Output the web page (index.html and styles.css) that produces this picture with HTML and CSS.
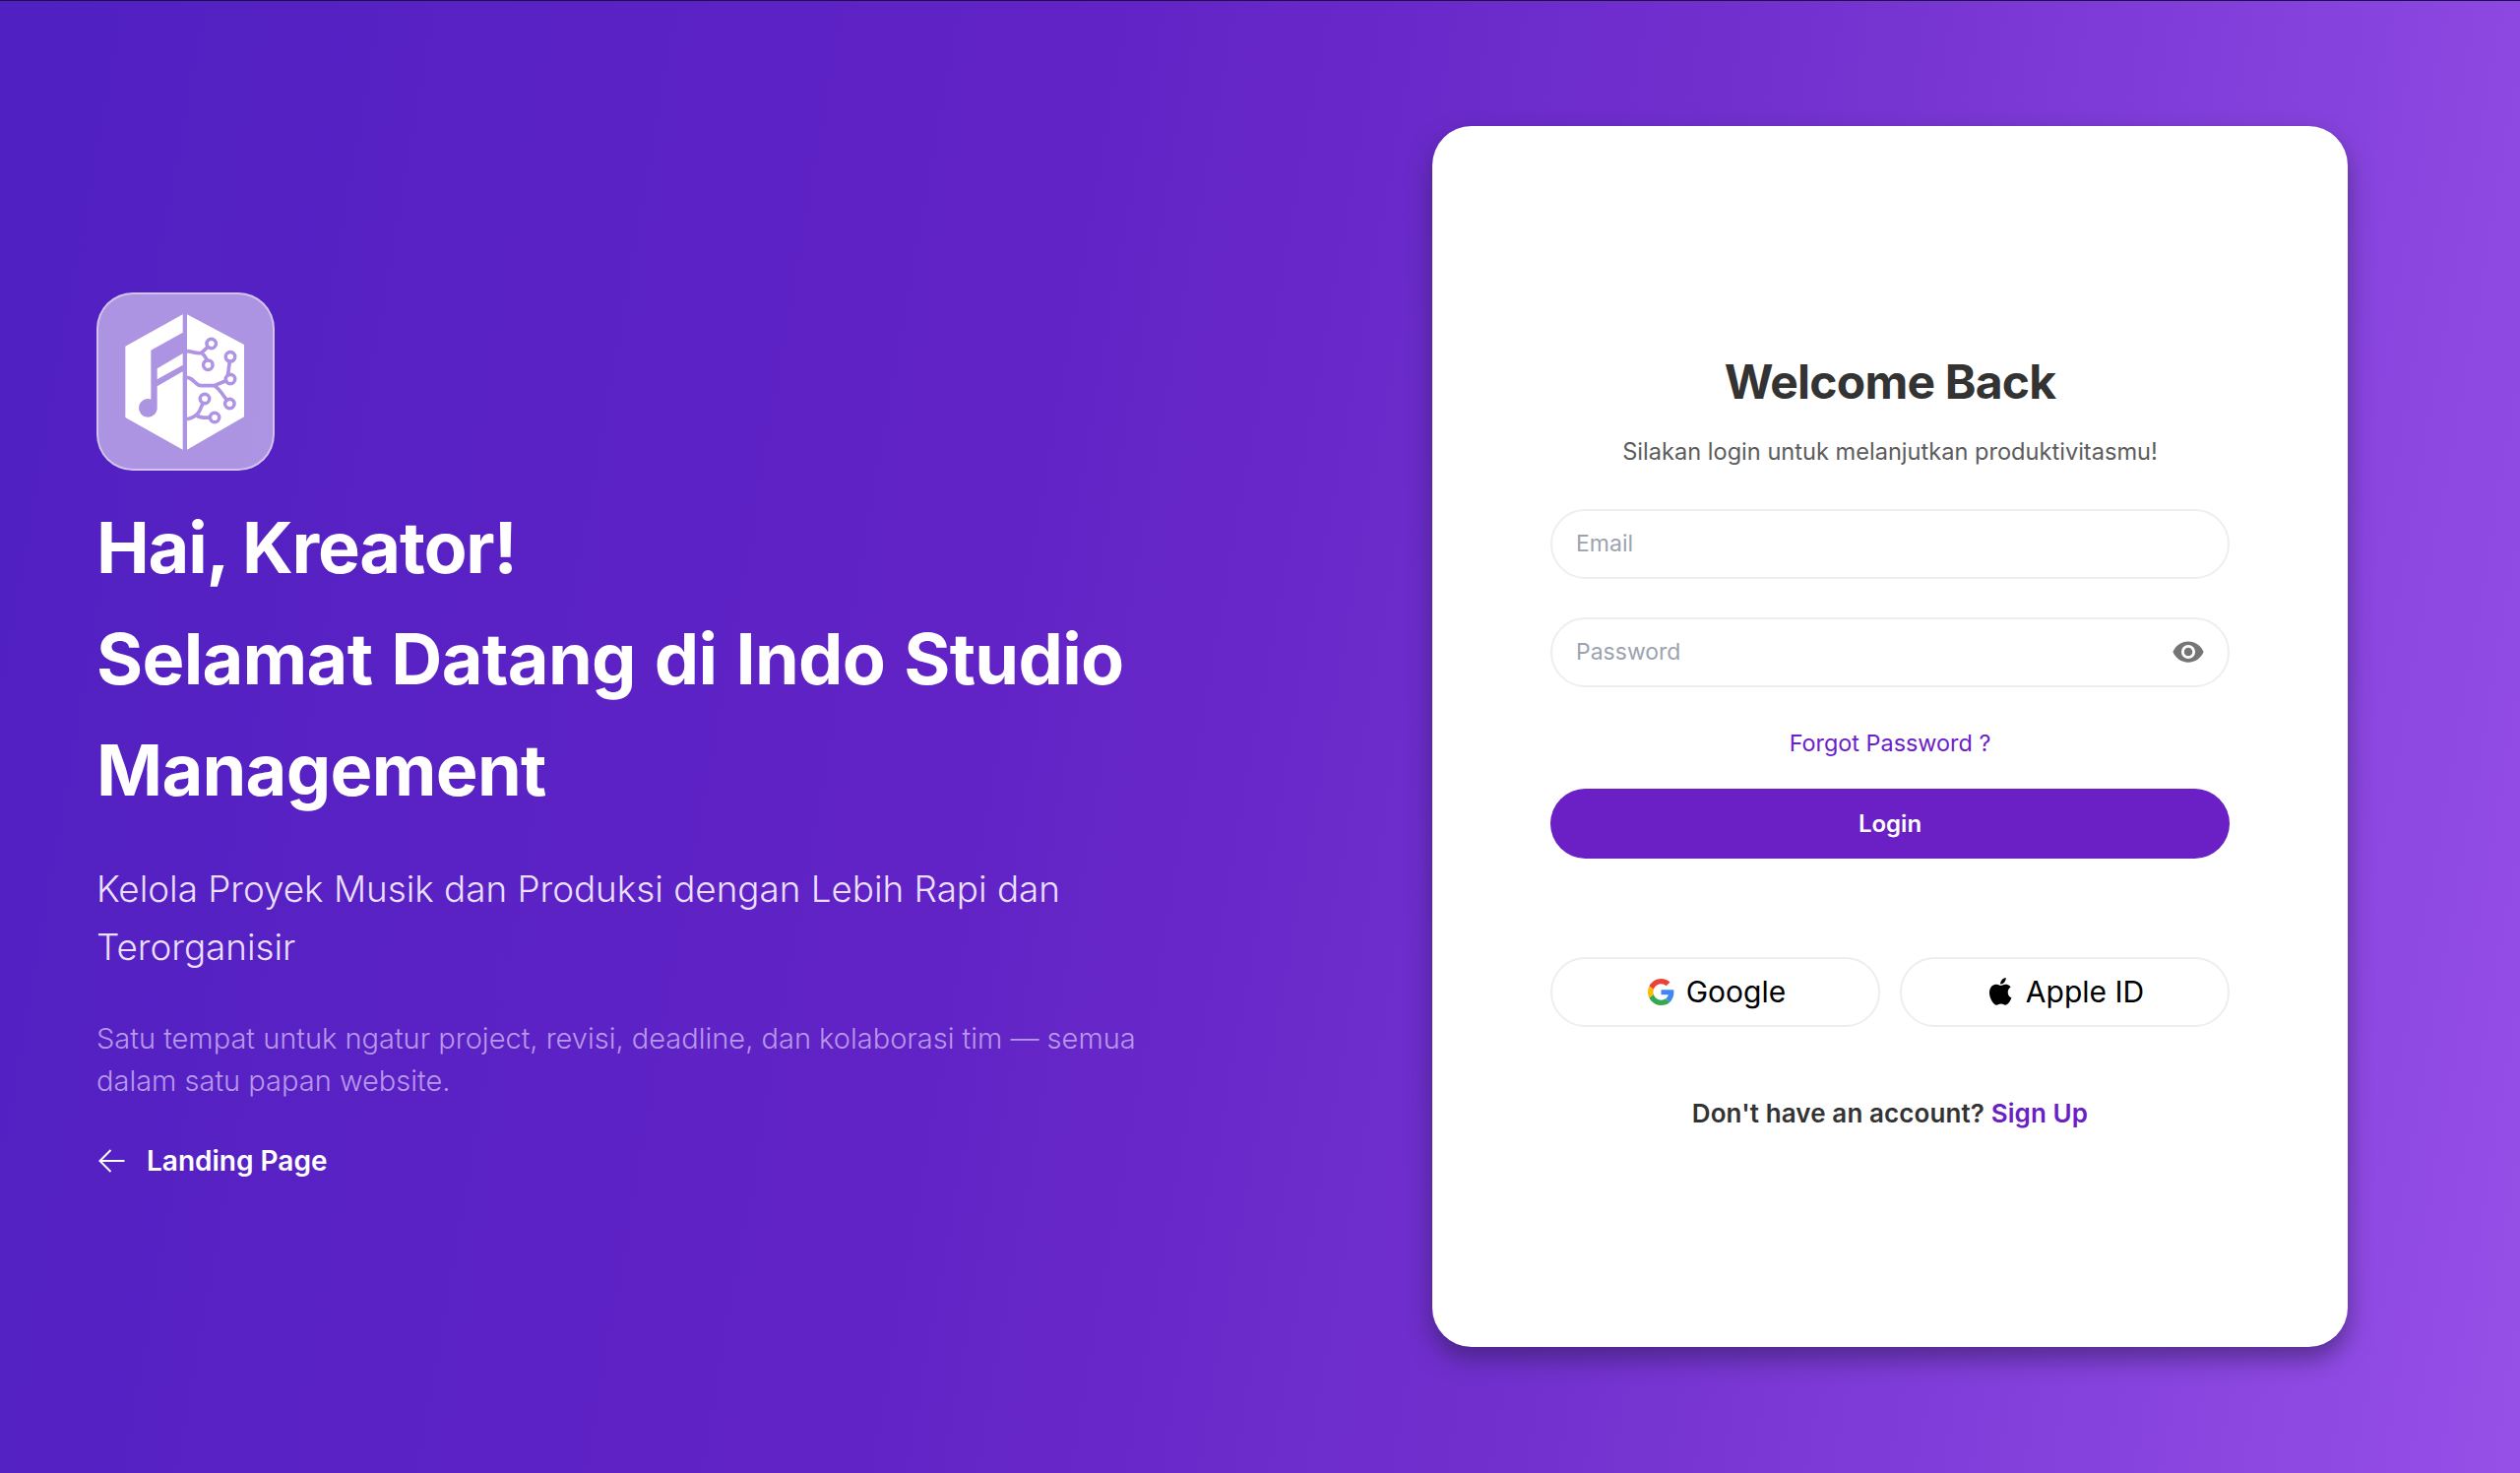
FILE: index.html
```html
<!DOCTYPE html>
<html lang="id">
<head>
<meta charset="utf-8">
<title>Indo Studio Management</title>
<link rel="stylesheet" href="styles.css">
</head>
<body>
<main class="page">
  <section class="hero">
    <div class="logo">
      <svg class="logo-mark" viewBox="0 0 660 660" aria-hidden="true">
        <path fill="#fff" fill-rule="evenodd" d="M320 118 145 215V432L320 530ZM320 173 223 227V376.500A28 28 0 1 0 242 403V337L320 292V272L242 316V283L320 237Z"/>
        <path fill="#fff" d="M333 118 507 210V430L333 530Z"/>
        <g fill="none" stroke="#af94e4" stroke-width="11">
          <path d="M333 230C350 232 365 238 377 235L407 207M377 235C390 245 395 255 397 272"/>
          <path d="M333 310C355 312 358 335 375 335H415L465 315M415 335C435 345 445 370 463 390M465 247 458 300 465 315"/>
          <path d="M333 437C355 432 365 425 372 410L387 375M362 425C370 435 390 432 417 432"/>
          <circle cx="407" cy="207" r="14"/><circle cx="397" cy="272" r="14"/><circle cx="465" cy="247" r="14"/><circle cx="465" cy="315" r="14"/><circle cx="463" cy="390" r="14"/><circle cx="387" cy="375" r="14"/><circle cx="417" cy="432" r="14"/>
        </g>
        <g fill="#fff">
          <circle cx="407" cy="207" r="8.500"/><circle cx="397" cy="272" r="8.500"/><circle cx="465" cy="247" r="8.500"/><circle cx="465" cy="315" r="8.500"/><circle cx="463" cy="390" r="8.500"/><circle cx="387" cy="375" r="8.500"/><circle cx="417" cy="432" r="8.500"/>
        </g>
      </svg>
    </div>
    <h1 class="headline"><span class="greet">Hai, Kreator!</span><br>Selamat Datang di Indo Studio Management</h1>
    <p class="subhead">Kelola Proyek Musik dan Produksi dengan Lebih Rapi dan Terorganisir</p>
    <p class="note">Satu tempat untuk ngatur project, revisi, deadline, dan kolaborasi tim — semua dalam satu papan website.</p>
    <a class="back" href="#">
      <svg class="back-icon" viewBox="0 0 29 24" aria-hidden="true"><path d="M28.500 12H3.500M14.500 1 3.500 12l11 11"/></svg>
      Landing Page
    </a>
  </section>
  <section class="card">
    <h2 class="title">Welcome Back</h2>
    <p class="lead">Silakan login untuk melanjutkan produktivitasmu!</p>
    <div class="field field-email"><span class="placeholder">Email</span></div>
    <div class="field field-pass">
      <span class="placeholder">Password</span>
      <svg class="eye" viewBox="0 0 24 24" aria-hidden="true"><path fill="#757575" d="M12 4.500C7 4.500 2.700 7.600 1 12c1.700 4.400 6 7.500 11 7.500s9.300-3.100 11-7.500c-1.700-4.400-6-7.500-11-7.500ZM12 17a5 5 0 1 1 0-10 5 5 0 0 1 0 10Zm0-8a3 3 0 1 0 0 6 3 3 0 0 0 0-6Z"/></svg>
    </div>
    <a class="forgot" href="#">Forgot Password ?</a>
    <button class="login" type="button">Login</button>
    <div class="socials">
      <button class="social social-google" type="button">
        <svg class="social-icon" viewBox="0 0 48 48" aria-hidden="true">
          <path fill="#EA4335" d="M24 9.500c3.500 0 6.700 1.200 9.200 3.600l6.900-6.900C35.900 2.400 30.500 0 24 0 14.600 0 6.500 5.400 2.600 13.200l8 6.200C12.400 13.700 17.700 9.500 24 9.500Z"/>
          <path fill="#4285F4" d="M46.980 24.550c0-1.570-.15-3.090-.38-4.550H24v9.020h12.940c-.58 2.960-2.260 5.480-4.780 7.180l7.730 6c4.510-4.180 7.090-10.360 7.090-17.650Z"/>
          <path fill="#FBBC05" d="M10.530 28.590c-.48-1.450-.76-2.990-.76-4.590s.27-3.140.76-4.590l-7.980-6.190C.92 16.460 0 20.120 0 24c0 3.880.92 7.540 2.560 10.780l7.970-6.190Z"/>
          <path fill="#34A853" d="M24 48c6.480 0 11.930-2.130 15.890-5.810l-7.730-6c-2.150 1.450-4.920 2.300-8.160 2.300-6.260 0-11.570-4.220-13.470-9.910l-7.980 6.190C6.510 42.620 14.620 48 24 48Z"/>
        </svg>
        Google
      </button>
      <button class="social" type="button">
        <svg class="social-icon social-icon-apple" viewBox="0 0 24 24" aria-hidden="true"><path d="M17.050 12.540c-.03-2.610 2.130-3.870 2.230-3.930-1.220-1.780-3.110-2.020-3.780-2.050-1.610-.16-3.140.95-3.960.95-.81 0-2.080-.93-3.420-.9-1.760.03-3.380 1.020-4.290 2.600-1.830 3.170-.47 7.870 1.310 10.450.87 1.260 1.910 2.680 3.270 2.630 1.310-.05 1.810-.85 3.390-.85 1.590 0 2.030.85 3.420.82 1.410-.02 2.310-1.280 3.170-2.550 1-1.460 1.410-2.880 1.440-2.950-.03-.01-2.760-1.060-2.780-4.220ZM14.450 4.880c.72-.88 1.210-2.100 1.080-3.320-1.040.04-2.300.69-3.050 1.570-.67.77-1.260 2.010-1.100 3.200 1.160.09 2.350-.59 3.070-1.450Z"/></svg>
        Apple ID
      </button>
    </div>
    <p class="signup">Don't have an account? <a class="signup-link" href="#">Sign Up</a></p>
  </section>
</main>
</body>
</html>
```
FILE: styles.css
```css
* { box-sizing: border-box; }
html, body { margin: 0; height: 100%; }
body {
  font-family: Inter, "Noto Sans", "Liberation Sans", sans-serif;
  background: #4f1fc0;
  overflow: hidden;
}
a { text-decoration: none; }
.page {
  height: 1496px;
  display: flex;
  justify-content: space-between;
  align-items: center;
  padding: 0 175px 0 98px;
  background: linear-gradient(100deg, #5020c2 0%, #6223c6 40%, #7331cf 65%, #9650e8 100%);
  box-shadow: inset 0 1px 0 #20104a;
}
.hero { width: 1090px; color: #fff; padding-bottom: 4px; }
.logo {
  width: 181px;
  height: 181px;
  border-radius: 37px;
  border: 2px solid rgba(255,255,255,.45);
  background: rgba(255,255,255,.52);
  margin-bottom: 21px;
  position: relative;
  overflow: hidden;
}
.logo-mark { position: absolute; left: -21px; top: -19px; width: 220px; height: 220px; }
.headline { margin: 0 0 35px; font-size: 72px; line-height: 113px; font-weight: 700; letter-spacing: -.7px; word-spacing: 2.7px; }
.greet { letter-spacing: -1.2px; word-spacing: 0; }
.subhead { margin: 0 0 42px; font-size: 36.8px; line-height: 59px; font-weight: 300; color: #eadfff; }
.note { margin: 0 0 43px; font-size: 29px; line-height: 43px; font-weight: 300; color: #b898ec; }
.back { display: flex; align-items: center; gap: 22px; color: #fff; font-size: 28px; font-weight: 600; }
.back-icon { width: 29px; height: 24px; fill: none; stroke: #fff; stroke-width: 2; }
.card {
  width: 930px;
  height: 1240px;
  flex: none;
  background: #fff;
  border-radius: 40px;
  padding: 11px 120px 0;
  display: flex;
  flex-direction: column;
  align-items: center;
  justify-content: center;
  box-shadow: 0 12px 24px rgba(50,30,90,.6);
}
.title { margin: 0 0 24px; font-size: 48px; line-height: 58px; font-weight: 700; color: #333; letter-spacing: -.8px; }
.lead { margin: 0 0 40px; font-size: 23.6px; line-height: 36px; color: #5c5c5c; }
.field {
  width: 100%;
  height: 71px;
  border: 2px solid #eeeeee;
  border-radius: 36px;
  display: flex;
  align-items: center;
  justify-content: space-between;
  padding: 0 23px 0 24px;
  margin-bottom: 39px;
}
.placeholder { font-size: 23px; color: #9ca3af; }
.eye { width: 34px; height: 34px; }
.forgot { color: #6b21c8; font-size: 23.4px; line-height: 36px; margin: 0 0 28px; }
.login {
  width: 100%;
  height: 71px;
  border: 0;
  border-radius: 36px;
  background: #6a20c4;
  color: #fff;
  font: 600 24px Inter, sans-serif;
  margin-bottom: 100px;
}
.socials { width: 100%; display: grid; grid-template-columns: 1fr 1fr; gap: 20px; margin-bottom: 70px; }
.social {
  height: 71px;
  border: 2px solid #eeeeee;
  border-radius: 36px;
  background: #fff;
  color: #000;
  font: 400 30px Inter, sans-serif;
  display: flex;
  align-items: center;
  justify-content: center;
  gap: 12px;
}
.social-google { padding-left: 9px; }
.social-icon { width: 27px; height: 27px; }
.social-icon-apple { width: 32px; height: 32px; margin-right: -3px; }
.signup { margin: 0; font-size: 26px; line-height: 36px; font-weight: 600; color: #333; letter-spacing: .1px; }
.signup-link { color: #6a20c4; }
```
